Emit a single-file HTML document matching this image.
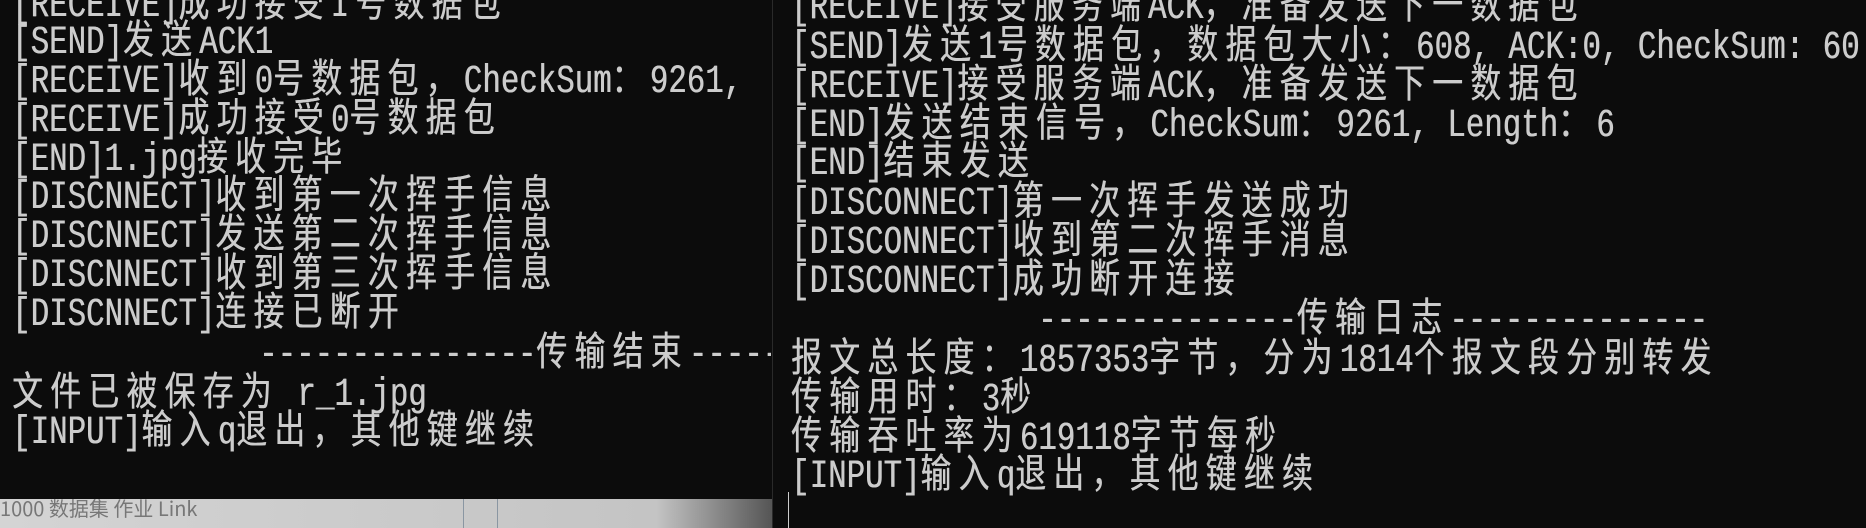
<!DOCTYPE html>
<html><head><meta charset="utf-8"><style>
html,body{margin:0;padding:0;}
body{width:1866px;height:528px;overflow:hidden;background:#0c0c0c;position:relative;font-family:"Liberation Mono","Noto Sans CJK SC",monospace;}
.win{position:absolute;background:#0c0c0c;overflow:hidden;}
.l{position:absolute;white-space:pre;font-size:40px;line-height:40px;color:#cccccc;transform:scaleX(0.77);transform-origin:0 0;text-shadow:0.6px 0 0 #cccccc;}
.c{letter-spacing:9.5px;font-family:"Noto Sans CJK SC",sans-serif;}
</style></head><body>
<div style="position:absolute;left:0;top:499px;width:772px;height:29px;background:linear-gradient(to right,#d4d4d4 0%,#c4c4c4 85%,#555 100%);">
 <div style="position:absolute;left:0;top:-6px;font-family:'Noto Sans CJK SC',sans-serif;font-size:20px;color:#777;white-space:nowrap;">1000 数据集 作业 Link</div>
 <div style="position:absolute;left:463px;top:0;width:1px;height:29px;background:#8a96a2"></div>
 <div style="position:absolute;left:497px;top:0;width:1px;height:29px;background:#8a96a2"></div>
</div>
<div class="win" style="left:0;top:0;width:771px;height:499px;">
<div class="l" style="left:12px;top:-21px">[RECEIVE]<span class="c">成功接受1号数据包</span></div>
<div class="l" style="left:12px;top:16px">[SEND]<span class="c">发送</span>ACK1</div>
<div class="l" style="left:12px;top:55px">[RECEIVE]<span class="c">收到</span>0<span class="c">号数据包，</span>CheckSum<span class="c">：</span>9261,</div>
<div class="l" style="left:12px;top:94px">[RECEIVE]<span class="c">成功接受</span>0<span class="c">号数据包</span></div>
<div class="l" style="left:12px;top:133px">[END]1.jpg<span class="c">接收完毕</span></div>
<div class="l" style="left:12px;top:171px">[DISCNNECT]<span class="c">收到第一次挥手信息</span></div>
<div class="l" style="left:12px;top:210px">[DISCNNECT]<span class="c">发送第二次挥手信息</span></div>
<div class="l" style="left:12px;top:249px">[DISCNNECT]<span class="c">收到第三次挥手信息</span></div>
<div class="l" style="left:12px;top:288px">[DISCNNECT]<span class="c">连接已断开</span></div>
<div class="l" style="left:259px;top:328px">---------------<span class="c">传输结束</span>-----</div>
<div class="l" style="left:12px;top:368px"><span class="c">文件已被保存为</span> r_1.jpg</div>
<div class="l" style="left:12px;top:406px">[INPUT]<span class="c">输入</span>q<span class="c">退出，其他键继续</span></div>
</div>
<div class="win" style="left:772px;top:0;width:1094px;height:528px;border-left:1px solid #2a2a2a;">
<div style="position:absolute;left:15px;top:492px;width:1px;height:36px;background:#ccc"></div>
<div class="l" style="left:18px;top:-19px">[RECEIVE]<span class="c">接受服务端</span>ACK<span class="c">，准备发送下一数据包</span></div>
<div class="l" style="left:18px;top:21px">[SEND]<span class="c">发送</span>1<span class="c">号数据包，数据包大小：</span>608, ACK:0, CheckSum: 60</div>
<div class="l" style="left:18px;top:60px">[RECEIVE]<span class="c">接受服务端</span>ACK<span class="c">，准备发送下一数据包</span></div>
<div class="l" style="left:18px;top:99px">[END]<span class="c">发送结束信号，</span>CheckSum<span class="c">：</span>9261, Length<span class="c">：</span>6</div>
<div class="l" style="left:18px;top:137px">[END]<span class="c">结束发送</span></div>
<div class="l" style="left:18px;top:177px">[DISCONNECT]<span class="c">第一次挥手发送成功</span></div>
<div class="l" style="left:18px;top:216px">[DISCONNECT]<span class="c">收到第二次挥手消息</span></div>
<div class="l" style="left:18px;top:255px">[DISCONNECT]<span class="c">成功断开连接</span></div>
<div class="l" style="left:265px;top:294px">--------------<span class="c">传输日志</span>--------------</div>
<div class="l" style="left:18px;top:334px"><span class="c">报文总长度：</span>1857353<span class="c">字节，分为</span>1814<span class="c">个报文段分别转发</span></div>
<div class="l" style="left:18px;top:373px"><span class="c">传输用时：</span>3<span class="c">秒</span></div>
<div class="l" style="left:18px;top:412px"><span class="c">传输吞吐率为</span>619118<span class="c">字节每秒</span></div>
<div class="l" style="left:18px;top:450px">[INPUT]<span class="c">输入</span>q<span class="c">退出，其他键继续</span></div>
</div>
</body></html>
